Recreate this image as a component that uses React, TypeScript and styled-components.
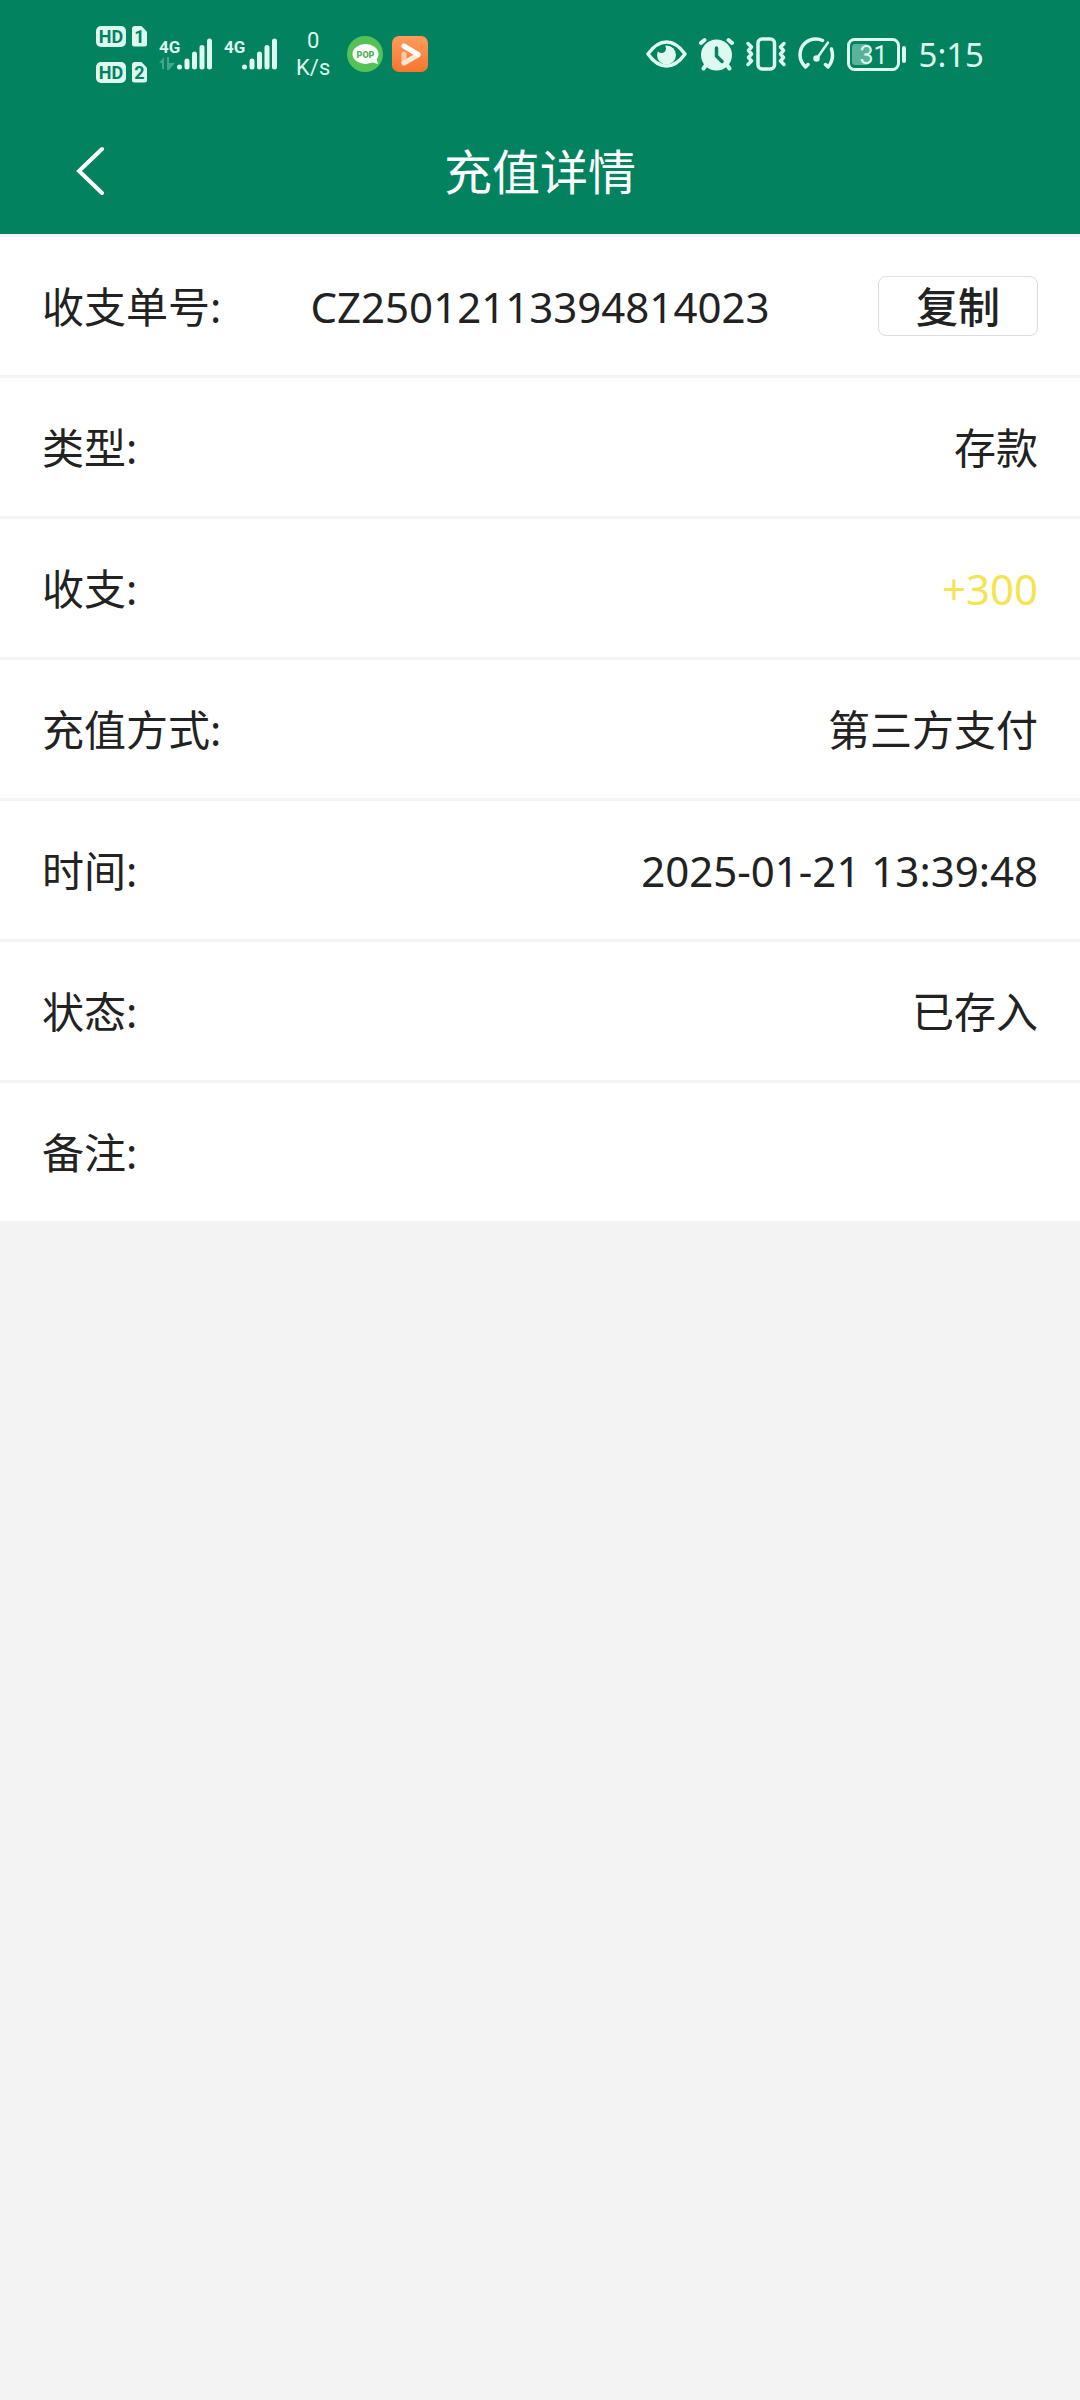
import React from 'react';
import styled, { createGlobalStyle } from 'styled-components';

const GREEN = '#03825f';
const TINT = '#dcfaf0';
const LINE = '#f3f3f3';
const INK = '#222222';
const FONT = '"Noto Sans", "Noto Sans CJK SC", sans-serif';
const NARROW = 'Roboto, sans-serif';

const GlobalStyle = createGlobalStyle`
  * { box-sizing: border-box; }
  body {
    margin: 0;
    background: ${LINE};
    color: ${INK};
    font-family: ${FONT};
  }
`;

const Page = styled.div`
  min-height: 100vh;
  background: ${LINE};
`;

const Header = styled.header`
  background: ${GREEN};
  color: #ffffff;
`;

const StatusBar = styled.div`
  display: flex;
  align-items: center;
  justify-content: space-between;
  height: 108px;
  padding: 0 96px;
  color: ${TINT};
`;

const StatusGroup = styled.div`
  display: flex;
  align-items: center;
  gap: 12px;

  svg { display: block; }
`;

const SimGrid = styled.div`
  display: grid;
  grid-template-columns: 30px 15px;
  gap: 15px 6px;
`;

const Badge = styled.span<{ $sim?: boolean }>`
  height: 21px;
  border-radius: ${p => (p.$sim ? '3px' : '5px')};
  background: ${TINT};
  clip-path: ${p => (p.$sim ? 'polygon(0 0, 60% 0, 100% 30%, 100% 100%, 0 100%)' : 'none')};
  color: ${GREEN};
  font: 700 18px/21px ${NARROW};
  text-align: center;
`;

const Speed = styled.div`
  padding: 0 5px 0 7px;
  font: 400 22px/27px Roboto, sans-serif;
  text-align: center;
`;

const Apps = styled.div`
  display: flex;
  gap: 9px;
`;

const Clock = styled.time`
  padding-top: 2px;
  font-size: 33px;
  line-height: 40px;
`;

const NavBar = styled.div`
  display: grid;
  grid-template-columns: 1fr auto 1fr;
  align-items: center;
  height: 126px;
  padding: 0 42px;
`;

const BackButton = styled.button`
  display: flex;
  align-items: center;
  justify-content: center;
  justify-self: start;
  width: 96px;
  height: 96px;
  padding: 0;
  border: 0;
  background: none;
  color: inherit;
  cursor: pointer;
`;

const Title = styled.h1`
  margin: 0;
  padding-top: 2px;
  font-size: 48px;
  font-weight: 400;
  line-height: 72px;
`;

const Details = styled.dl`
  margin: 0;
  background: #ffffff;
`;

const Row = styled.div<{ $centered?: boolean }>`
  display: grid;
  grid-template-columns: ${p => (p.$centered ? '1fr auto 1fr' : 'auto 1fr')};
  align-items: center;
  height: 141px;
  padding: 0 42px;
  border-top: 3px solid ${LINE};
  font-size: 42px;
  line-height: 60px;
`;

const Label = styled.dt`
  padding-top: 2px;
  white-space: nowrap;
`;

const Value = styled.dd<{ $tone?: string }>`
  margin: 0;
  padding-top: 2px;
  color: ${p => p.$tone ?? INK};
  text-align: right;
`;

const CopyCell = styled.dd`
  display: flex;
  justify-content: flex-end;
  margin: 0;
`;

const CopyButton = styled.button`
  width: 160px;
  height: 60px;
  padding: 2px 0 0;
  border: 1px solid #dddddd;
  border-radius: 8px;
  background: #ffffff;
  color: ${INK};
  font: 500 42px/56px ${FONT};
  cursor: pointer;
`;

const Signal = ({ active }: { active?: boolean }) => (
  <svg width="53" height="36" viewBox="0 0 53 36" role="img" aria-label="4G">
    <text x="0" y="17" fill={TINT} fontFamily={NARROW} fontWeight="700" fontSize="17">4G</text>
    {active && (
      <path d="M0 27l5-6v12H3v-6zM8 21h2v6h6l-6 7H8z" fill={TINT} opacity="0.3" />
    )}
    <path d="M20.5 31V31.1M28 31V25M35.5 31V18M43 31V11.5M50.5 31V5" stroke={TINT} strokeWidth="5" strokeLinecap="round" />
  </svg>
);

const PopIcon = () => (
  <svg width="36" height="36" viewBox="0 0 36 36" role="img" aria-label="POP">
    <circle cx="18" cy="18" r="18" fill="#55c257" />
    <ellipse cx="18.5" cy="18" rx="13" ry="10" fill="#fff" />
    <path d="M24 26l7 2-2-7z" fill="#fff" />
    <text x="18.5" y="21.5" textAnchor="middle" fill="#55b257" fontFamily="Roboto, sans-serif" fontWeight="900" fontSize="9">POP</text>
  </svg>
);

const PlayIcon = () => (
  <svg width="36" height="36" viewBox="0 0 36 36" role="img" aria-label="video">
    <defs>
      <linearGradient id="play" x1="0" y1="0" x2="0" y2="1">
        <stop offset="0" stopColor="#ff9c5c" />
        <stop offset="1" stopColor="#f8752f" />
      </linearGradient>
    </defs>
    <rect width="36" height="36" rx="7" fill="url(#play)" />
    <g fill="none" strokeLinecap="round" strokeWidth="5">
      <path d="M12 27V18" stroke="#ffc9a8" />
      <path d="M12 27L26 19" stroke="#ffe6d8" />
      <path d="M12 10L26 18.5" stroke="#fff" />
    </g>
  </svg>
);

const EyeIcon = () => (
  <svg width="41" height="28" viewBox="0 0 41 28" aria-hidden="true">
    <mask id="glint">
      <rect width="41" height="28" fill="#fff" />
      <circle cx="15.5" cy="8.5" r="4.5" fill="#000" />
    </mask>
    <path d="M2 14C8 5.5 14 2 20.5 2S33 5.5 39 14C33 22.5 27 26 20.5 26S8 22.5 2 14z" fill="none" stroke={TINT} strokeWidth="3.5" strokeLinejoin="round" />
    <circle cx="20.5" cy="15" r="9.5" fill={TINT} mask="url(#glint)" />
  </svg>
);

const AlarmIcon = () => (
  <svg width="35" height="34" viewBox="0 0 35 34" aria-hidden="true">
    <path d="M2 6L5.5 3M33 6L29.5 3M7 28L4.5 31.5M28 28L30.5 31.5" stroke={TINT} strokeWidth="4" strokeLinecap="round" />
    <circle cx="17.5" cy="18" r="15.5" fill={TINT} />
    <path d="M17.5 11V19L23 24.5" fill="none" stroke={GREEN} strokeWidth="3.5" strokeLinecap="round" strokeLinejoin="round" />
  </svg>
);

const VibrateIcon = () => (
  <svg width="40" height="34" viewBox="0 0 40 34" fill="none" stroke={TINT} strokeLinecap="round" strokeLinejoin="round" aria-hidden="true">
    <rect x="12" y="2" width="16.5" height="30" rx="4" strokeWidth="3.5" />
    <path d="M2 6.5L5.5 10 2.5 13.5 5.5 17 2.5 20.5 5.5 24 2 27.5M38 6.5L34.5 10 37.5 13.5 34.5 17 37.5 20.5 34.5 24 38 27.5" strokeWidth="3.5" />
  </svg>
);

const GaugeIcon = () => (
  <svg width="37" height="34" viewBox="0 0 37 34" fill="none" stroke={TINT} strokeWidth="3.5" strokeLinecap="round" strokeLinejoin="round" aria-hidden="true">
    <path d="M10 27.5L7.5 30C3.5 26 2 22 2 18C2 8.5 9 2 18 2C20.5 2 22.5 2.5 24.5 3.5M33.5 12C35.5 19 34.5 25 30 30L27.5 27.5" />
    <path d="M18.5 22L30 5.5" strokeWidth="2.5" />
    <circle cx="18.5" cy="21.5" r="2.5" fill={TINT} strokeWidth="1.5" />
  </svg>
);

const BatteryIcon = () => (
  <svg width="60" height="33" viewBox="0 0 60 33" role="img" aria-label="31%">
    <rect x="1.5" y="1.5" width="50" height="30" rx="6" fill="none" stroke={TINT} strokeWidth="3" />
    <rect x="5" y="6" width="17" height="21" rx="3" fill={TINT} opacity="0.4" />
    <text x="26.5" y="26" textAnchor="middle" fill={TINT} fontFamily="Roboto, sans-serif" fontSize="25">31</text>
    <rect x="55" y="8" width="4" height="17" rx="2" fill={TINT} />
  </svg>
);

const rows: { label: string; value: string; tone?: string }[] = [
  { label: '类型:', value: '存款' },
  { label: '收支:', value: '+300', tone: '#f5e452' },
  { label: '充值方式:', value: '第三方支付' },
  { label: '时间:', value: '2025-01-21 13:39:48' },
  { label: '状态:', value: '已存入' },
  { label: '备注:', value: '' },
];

const ORDER_NO = 'CZ25012113394814023';

export default function App() {
  return (
    <Page>
      <GlobalStyle />
      <Header>
        <StatusBar>
          <StatusGroup>
            <SimGrid>
              <Badge>HD</Badge>
              <Badge $sim>1</Badge>
              <Badge>HD</Badge>
              <Badge $sim>2</Badge>
            </SimGrid>
            <Signal active />
            <Signal />
            <Speed>
              0<br />K/s
            </Speed>
            <Apps>
              <PopIcon />
              <PlayIcon />
            </Apps>
          </StatusGroup>
          <StatusGroup>
            <EyeIcon />
            <AlarmIcon />
            <VibrateIcon />
            <GaugeIcon />
            <BatteryIcon />
            <Clock>5:15</Clock>
          </StatusGroup>
        </StatusBar>
        <NavBar>
          <BackButton type="button" aria-label="返回">
            <svg width="28" height="50" viewBox="0 0 28 50" fill="none" stroke="currentColor" strokeWidth="4" strokeLinecap="round" aria-hidden="true">
              <path d="M26 3L3 25L26 47" />
            </svg>
          </BackButton>
          <Title>充值详情</Title>
        </NavBar>
      </Header>
      <Details>
        <Row $centered>
          <Label>收支单号:</Label>
          <Value>{ORDER_NO}</Value>
          <CopyCell>
            <CopyButton type="button" onClick={() => navigator.clipboard?.writeText(ORDER_NO)}>
              复制
            </CopyButton>
          </CopyCell>
        </Row>
        {rows.map(row => (
          <Row key={row.label}>
            <Label>{row.label}</Label>
            <Value $tone={row.tone}>{row.value}</Value>
          </Row>
        ))}
      </Details>
    </Page>
  );
}
